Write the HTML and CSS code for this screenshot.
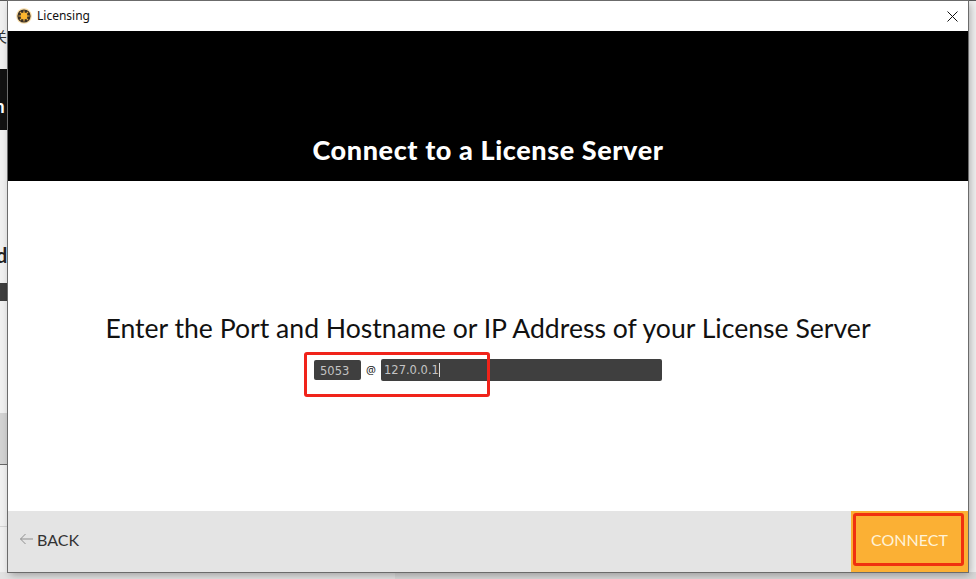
FILE: index.html
```html
<!DOCTYPE html>
<html lang="en">
<head>
<meta charset="utf-8">
<title>Licensing</title>
<link rel="stylesheet" href="styles.css">
</head>
<body>
<div class="backdrop">
  <div class="bd-dark-top"></div>
  <div class="bd-glyph">关</div>
  <div class="bd-black"><span>n</span></div>
  <div class="bd-letter">d</div>
  <div class="bd-bar"></div>
  <div class="bd-panel"></div>
  <div class="bd-rule"></div>
  <div class="bd-bottom"><div class="bd-bottom-dark"></div></div>
</div>
<main class="dialog">
  <header class="titlebar">
    <svg class="app-icon" width="16" height="16" viewBox="0 0 16 16" aria-hidden="true">
      <circle cx="8" cy="8" r="7.8" fill="#f8dca6"/>
      <circle cx="8" cy="8" r="6.6" fill="#3a3026"/>
      <path d="M8 2.4v3M8 10.6v3M2.4 8h3M10.6 8h3M4 4l2.2 2.2M9.8 9.8L12 12M4 12l2.2-2.2M9.8 6.2L12 4" stroke="#e8a93c" stroke-width="1.1"/>
      <circle cx="8" cy="8" r="3.4" fill="#fdb52e"/>
    </svg>
    <span class="title">Licensing</span>
    <svg class="close" width="11" height="11" viewBox="0 0 11 11" aria-hidden="true">
      <path d="M.5.5l10 10M10.5.5l-10 10" stroke="#111" stroke-width="1" fill="none"/>
    </svg>
  </header>
  <section class="hero"><h1>Connect to a License Server</h1></section>
  <section class="content">
    <h2>Enter the Port and Hostname or IP Address of your License Server</h2>
    <div class="server-row">
      <div class="field port">5053</div>
      <span class="at">@</span>
      <div class="field host">127.0.0.1<i class="caret"></i></div>
      <div class="mark mark-input"></div>
    </div>
  </section>
  <footer class="footer">
    <div class="back">
      <svg width="16" height="12" viewBox="0 0 16 12" aria-hidden="true">
        <path d="M14 6H1.5M6.5 1L1.5 6l5 5" stroke="#8f8f8f" stroke-width="1" fill="none"/>
      </svg>
      <span>BACK</span>
    </div>
    <div class="connect">CONNECT<div class="mark mark-connect"></div></div>
  </footer>
</main>
</body>
</html>
```

FILE: styles.css
```css
* { box-sizing: border-box; }
html, body { margin: 0; height: 100%; }
body {
  position: relative;
  width: 976px;
  height: 579px;
  overflow: hidden;
  padding: 1px 8px 7px 8px;
  background: #f0f0f0;
  font-family: "Lato", "Liberation Sans", sans-serif;
}
.backdrop { position: absolute; inset: 0; }
.bd-dark-top { position: absolute; left: 0; right: 0; top: 0; height: 1px; background: #5a5a5a; }
.bd-glyph {
  position: absolute; left: -7px; top: 28px; width: 14px;
  font: 14px/16px "Noto Sans CJK SC", sans-serif; color: #333;
}
.bd-black {
  position: absolute; left: 0; top: 69px; width: 8px; height: 61px;
  background: #111; color: #fff; overflow: hidden;
  font: 700 19px/70px "Lato", sans-serif;
}
.bd-black span { position: absolute; left: -6px; top: 2px; }
.bd-letter {
  position: absolute; left: -4px; top: 242px; width: 12px; overflow: hidden;
  font: 700 20px/26px "Lato", sans-serif; color: #222;
}
.bd-bar { position: absolute; left: 0; top: 283px; width: 8px; height: 18px; background: #3d3d3d; }
.bd-panel {
  position: absolute; left: 0; top: 413px; width: 8px; height: 52px;
  background: #d2d2d2; border-bottom: 1px solid #666;
}
.bd-rule { position: absolute; left: 0; top: 526px; width: 8px; height: 1px; background: #d4d4d4; }
.bd-bottom { position: absolute; left: 0; right: 0; bottom: 0; height: 7px; background: #e2e2e2; }
.bd-bottom-dark { position: absolute; left: 395px; right: 0; top: 0; bottom: 0; background: #d8d8d8; }

.dialog {
  position: relative;
  width: 960px;
  height: 571px;
  display: flex;
  flex-direction: column;
  background: #fff;
  box-shadow: 0 0 0 1px #6b6b6b, 2px 3px 8px rgba(0,0,0,.3);
}
.titlebar {
  position: relative;
  flex: 0 0 30px;
  display: flex;
  align-items: center;
  padding: 0 10px 0 8px;
  background: #fff;
}
.app-icon { flex: none; }
.title {
  margin-left: 5px;
  font: 12px/16px "Noto Sans", "Liberation Sans", sans-serif;
  color: #111;
}
.close { margin-left: auto; }
.hero {
  flex: 0 0 150px;
  display: flex;
  align-items: flex-end;
  justify-content: center;
  padding-bottom: 16px;
  background: #000;
}
h1 {
  margin: 0;
  font: 900 27px/30px "Lato", sans-serif;
  letter-spacing: .6px;
  color: #fff;
}
.content {
  flex: 1;
  display: flex;
  flex-direction: column;
  align-items: center;
  padding-top: 132px;
}
h2 {
  margin: 0;
  font: 400 26.6px/30px "Lato", sans-serif;
  color: #111;
}
.server-row {
  position: relative;
  display: flex;
  align-items: center;
  align-self: flex-start;
  margin: 16px 0 0 306px;
}
.field {
  background: #3f3f3f;
  color: #c4c4c4;
  border-radius: 2px;
  font: 11.5px/22px "DejaVu Sans", "Liberation Sans", sans-serif;
  padding-left: 6px;
}
.port { width: 47px; height: 20px; }
.at { width: 20px; text-align: center; font: 11px/20px "Noto Sans", sans-serif; color: #222; }
.host { display: flex; align-items: center; width: 281px; height: 22px; padding-left: 3px; }
.caret { width: 1px; height: 14px; background: #ddd; }
.mark {
  position: absolute;
  border: 3px solid #f0231a;
  border-radius: 3px;
  pointer-events: none;
}
.mark-input { left: -10px; top: -7px; width: 186px; height: 45px; }
.footer {
  flex: 0 0 61px;
  display: flex;
  align-items: stretch;
  justify-content: space-between;
  background: #e4e4e4;
}
.back {
  display: flex;
  align-items: center;
  gap: 2px;
  padding: 0 0 5px 11px;
  font-size: 16px;
  color: #333;
}
.connect {
  position: relative;
  width: 117px;
  display: flex;
  align-items: center;
  justify-content: center;
  padding: 0 0 5px 0;
  background: #fbb034;
  color: #fff3d8;
  font-size: 16px;
}
.mark-connect { left: 2px; top: 2px; width: 111px; height: 53px; border-color: #f0300f; }
```
